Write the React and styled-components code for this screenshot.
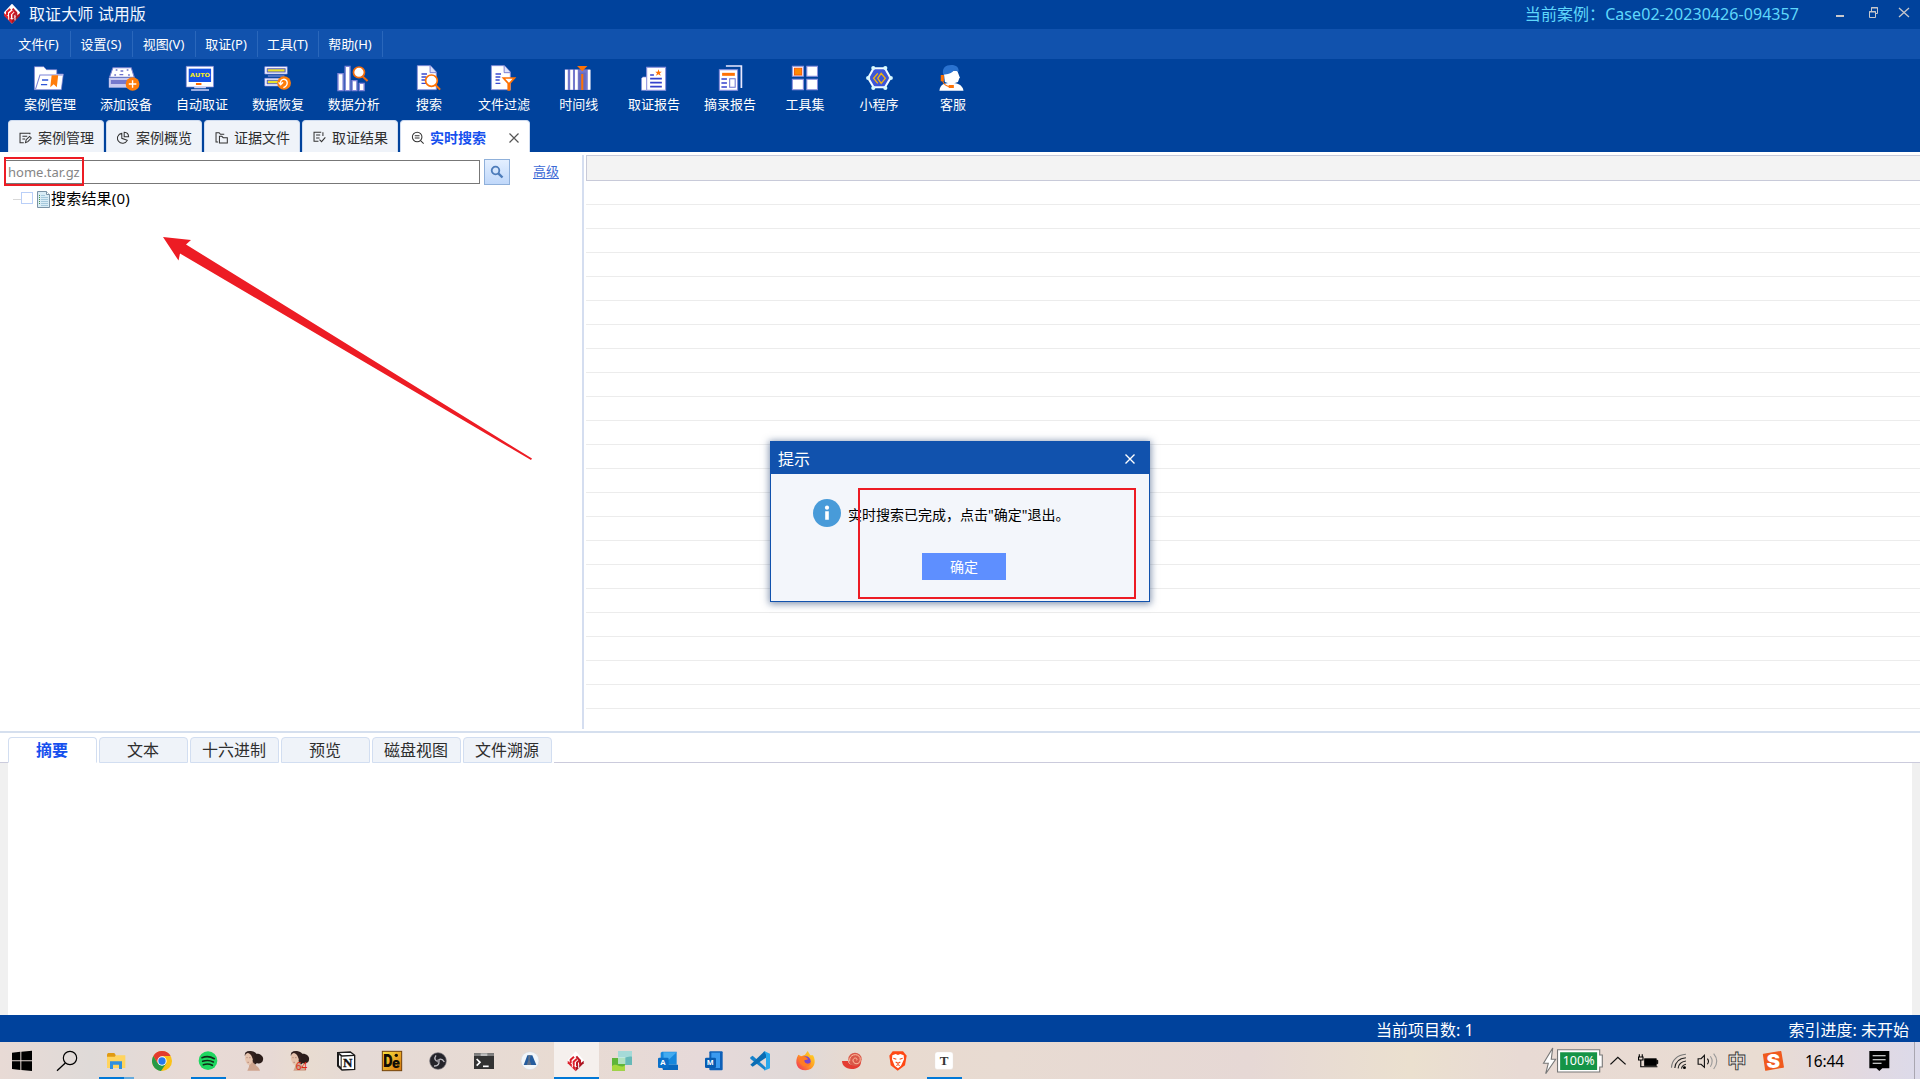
import React from 'react';
import styled, { createGlobalStyle } from 'styled-components';

const Global = createGlobalStyle`
  * { box-sizing: border-box; }
  body { margin: 0; overflow: hidden; background: #fff; }
  svg { display: block; flex: none; }
`;

const BLUE = '#00429c';
const MID = '#1152ad';
const RED = '#ed1c24';

const Window = styled.div`
  position: relative;
  display: flex;
  flex-direction: column;
  width: 1920px;
  height: 1079px;
  overflow: hidden;
  background: #fff;
  color: #000;
  font-family: 'Noto Sans', 'Noto Sans CJK SC', sans-serif;
  font-size: 14px;
  white-space: nowrap;
`;

/* ---------- header ---------- */
const TitleBar = styled.header`
  display: flex;
  align-items: center;
  height: 29px;
  padding-left: 4px;
  background: ${BLUE};
  color: #f2f7ff;
  font-size: 16px;
  line-height: 29px;
`;
const AppName = styled.span`
  margin-left: 9px;
  letter-spacing: 0.1px;
  flex: 1;
`;
const CaseName = styled.span`
  color: #5fd7fb;
  margin-right: 28px;
  letter-spacing: 0.06px;
`;
const MenuBar = styled.nav`
  display: flex;
  align-items: center;
  height: 30px;
  padding-left: 8px;
  background: ${MID};
`;
const MenuItem = styled.div`
  width: ${(p) => p.$w}px;
  height: 26px;
  padding-right: 1px;
  border-right: 1px solid #2a67bb;
  color: #fff;
  font-size: 13px;
  line-height: 26px;
  text-align: center;
`;
const Toolbar = styled.div`
  display: flex;
  height: 61px;
  padding: 5px 0 0 12px;
  background: ${BLUE};
`;
const Tool = styled.div`
  display: flex;
  flex-direction: column;
  align-items: center;
  width: ${(p) => p.$w}px;
  color: #fff;
  font-size: 13px;
  line-height: 25px;
`;
const TabStrip = styled.div`
  display: flex;
  gap: 2px;
  height: 32px;
  padding-left: 8px;
  background: ${BLUE};
`;
const Tab = styled.div`
  display: flex;
  align-items: center;
  width: ${(p) => (p.$active ? 130 : 96)}px;
  padding: 2px 10px 0 10px;
  border: 1px solid #cfdcf0;
  border-bottom: 0;
  border-radius: 4px 4px 0 0;
  background: ${(p) => (p.$active ? '#fff' : '#eff3f9')};
  color: ${(p) => (p.$active ? '#1650ee' : '#2e2e2e')};
  font-weight: ${(p) => (p.$active ? 700 : 400)};
  span { margin: 0 0 2px 6px; flex: 1; }
`;

/* ---------- main ---------- */
const Main = styled.main`
  display: flex;
  height: 579px;
  padding-top: 3px;
`;
const SearchPane = styled.section`
  width: 584px;
  height: 574px;
  border-right: 2px solid #d5def0;
`;
const SearchRow = styled.div`
  display: flex;
  align-items: center;
  height: 34px;
  padding-left: 5px;
`;
const SearchInput = styled.div`
  width: 475px;
  height: 24px;
  padding-left: 2px;
  border: 1px solid #777;
  color: #858585;
  font-size: 13px;
  line-height: 23px;
`;
const SearchButton = styled.div`
  display: flex;
  align-items: center;
  justify-content: center;
  width: 26px;
  height: 26px;
  margin: 0 23px 0 4px;
  border: 1px solid #8fb0da;
  background: linear-gradient(#e3efff, #c0d8fa);
`;
const Advanced = styled.a`
  margin-bottom: 3px;
  color: #3d6bd6;
  font-size: 13px;
  text-decoration: underline;
  text-underline-offset: 2px;
`;
const TreeRow = styled.div`
  display: flex;
  align-items: center;
  height: 20px;
  padding-left: 13px;
  font-size: 15px;
  letter-spacing: 0.2px;
  span { margin: 0 0 3px 1px; }
`;
const Branch = styled.i`
  width: 8px;
  height: 1px;
  background: #d8d8d8;
`;
const Check = styled.i`
  width: 12px;
  height: 12px;
  margin: 0 4px 2px 0;
  border: 1px solid #b9cff8;
`;
const Grid = styled.section`
  flex: 1;
  margin-left: 2px;
`;
const GridHead = styled.div`
  height: 26px;
  border: 1px solid #c8cad9;
  border-right: 0;
  background: #f3f3f3;
`;
const GridRow = styled.div`
  height: 24px;
  border-bottom: 1px solid #ececec;
`;

/* ---------- details ---------- */
const Details = styled.section`
  display: flex;
  flex-direction: column;
  height: 284px;
  border-top: 2px solid #d5dfee;
`;
const DetailTabs = styled.div`
  display: flex;
  align-items: stretch;
  height: 30px;
`;
const Baseline = styled.i`
  width: ${(p) => p.$w || 'auto'};
  flex: ${(p) => (p.$w ? 'none' : 1)};
  border-bottom: 1px solid #cbcbdc;
`;
const DetailTab = styled.div`
  width: 89px;
  margin: 4px 2px 0 0;
  padding-right: 1px;
  border: 1px solid #d2def1;
  border-bottom-color: ${(p) => (p.$active ? '#fff' : '#d2def1')};
  border-radius: 4px 4px 0 0;
  background: ${(p) => (p.$active ? '#fff' : '#eff3f9')};
  color: ${(p) => (p.$active ? '#1650ee' : '#2e2e2e')};
  font-size: 16px;
  font-weight: ${(p) => (p.$active ? 700 : 400)};
  line-height: 25px;
  text-align: center;
`;
const DetailBody = styled.div`
  flex: 1;
  border: solid #f0f0f0;
  border-width: 0 8px;
`;
const StatusBar = styled.footer`
  display: flex;
  justify-content: space-between;
  height: 27px;
  padding: 0 11px 0 1376px;
  background: ${BLUE};
  color: #fff;
  font-size: 16px;
  line-height: 30px;
`;

/* ---------- taskbar ---------- */
const TaskBar = styled.div`
  display: flex;
  height: 37px;
  background: linear-gradient(90deg, #e8dad5 0, #dfdad8 90px, #e8dad5 190px, #e7d9d5 270px, #e9dcd0 300px, #e5dad6 360px, #e8dbd2 560px, #e6d9d9 700px, #e0d9d8 800px, #e8dacf 860px, #e8dbd2 1000px, #e6d8d5 1250px, #ebe0cf 1410px, #e8dad4 1520px, #e9dcd2 1760px, #e3d9df 1850px, #dcdaea 1920px);
`;
const Task = styled.div`
  width: ${(p) => p.$w || 46}px;
  background: ${(p) => (p.$active ? 'linear-gradient(90deg, transparent 1px, #f5f0ed 1px)' : 'transparent')};
`;
const Tray = styled.div`
  display: flex;
  margin-left: auto;
`;
const Clock = styled.div`
  width: 75px;
  padding-left: 14px;
  font-size: 15.5px;
  letter-spacing: -0.1px;
  line-height: 39px;
`;
const ShowDesktop = styled.i`
  width: 6px;
  border-left: 1px solid #a9a6b0;
`;

/* ---------- overlays ---------- */
const Dialog = styled.div`
  position: absolute;
  left: 770px;
  top: 441px;
  width: 380px;
  height: 161px;
  border: 1px solid ${MID};
  background: #f3f6fb;
  box-shadow: 0 1px 7px 1px rgba(30, 60, 110, 0.55);
`;
const DialogTitle = styled.div`
  display: flex;
  align-items: center;
  justify-content: space-between;
  height: 32px;
  padding: 2px 14px 1px 7px;
  background: ${MID};
  color: #fff;
  font-size: 16px;
  line-height: 20px;
`;
const DialogMessage = styled.div`
  display: flex;
  align-items: center;
  gap: 7px;
  height: 28px;
  margin: 25px 0 0 42px;
  span { padding-top: 2px; }
`;
const OkButton = styled.div`
  width: 84px;
  height: 27px;
  margin: 26px 0 0 151px;
  background: #5e8fff;
  color: #fff;
  line-height: 27px;
  text-align: center;
`;
const Marker = styled.div`
  position: absolute;
  left: ${(p) => p.$x}px;
  top: ${(p) => p.$y}px;
  width: ${(p) => p.$w}px;
  height: ${(p) => p.$h}px;
  border: 2px solid ${RED};
`;
const ArrowLayer = styled.svg`
  position: absolute;
  left: 160px;
  top: 230px;
`;

const Pic = ({ w, h, box, children }) => (
  <svg width={w} height={h} viewBox={box} preserveAspectRatio="none" fill="none">{children}</svg>
);

const Cross = ({ c, s = 1.2 }) => (
  <svg width="10" height="10" viewBox="0 0 10 10"><path d="M.5.5 9.5 9.5M9.5.5.5 9.5" stroke={c} strokeWidth={s} /></svg>
);

/* brand cube, drawn on a 48 x 60 canvas */
const Cube = () => (
  <g>
    <path d="M24 0 48 26V34L24 60 0 34V26Z" fill="#fff" />
    <path d="M0 28 24 48V60L0 36Z" fill="#dc1f2a" />
    <path d="M48 28 24 48V60L48 36Z" fill="#a81420" />
    <path d="M9 35V25L19 16M18 43V31L28 22" stroke="#dc1f2a" strokeWidth="6" />
    <path d="M28 44V34L38 24M37 38V28L26 15" stroke="#c11824" strokeWidth="6" />
    <path d="M14 38V48M33 40V50" stroke="#fff" strokeWidth="3" />
  </g>
);

const Page = ({ x }) => (
  <g transform={`translate(${x} 0)`}>
    <path d="M1 197H39L56 216V269H1Z" fill="#fff" stroke="#8a90dc" strokeWidth="2.5" />
    <path d="M38 198V218H56" fill="#dfe2fb" stroke="#6a70cc" strokeWidth="2.5" />
    <path d="M13 222H29M13 231H27M13 240H25M13 250H27" stroke="#3a49d0" strokeWidth="4" />
  </g>
);

const tools = [
  ['案例管理', 76, 50, (
    <g>
      <path d="M100 200H127L135 209H165V222H184L178 269H100Z" fill="#fff" stroke="#777bd0" strokeWidth="2" />
      <path d="M103 268 116 225H182" stroke="#7d83d8" strokeWidth="3" />
      <path d="M122 240H140M119 254H137" stroke="#2f55d6" strokeWidth="4" />
      <path d="M150 226H169L165 262 156 253 146 262Z" fill="#ff7d0a" />
    </g>
  )],
  ['添加设备', 76, 126, (
    <g>
      <path d="M328 203H381L390 232H318Z" fill="#fff" stroke="#7b80cd" strokeWidth="3" />
      <path d="M316 234H391V263H316Z" fill="#c9caf0" />
      <path d="M322 240H372V252H322Z" fill="#7579cd" />
      <path d="M336 210h5M368 210h5M332 225h5M372 225h5M350 213h8M347 224h11" stroke="#6d72ca" strokeWidth="4" />
      <circle cx="385" cy="252" r="20" fill="#ff7d0a" />
      <path d="M374 252H396M385 241V263" stroke="#fff" strokeWidth="4" />
    </g>
  )],
  ['自动取证', 76, 202, (
    <g>
      <path d="M541 199H620V261H541Z" fill="#fff" stroke="#8187d8" strokeWidth="2" />
      <path d="M548 206H613V246H548Z" fill="#1552e6" />
      <text x="552" y="231" fontSize="17" fontWeight="700" fontFamily="DejaVu Sans" fill="#f8ec1e" textLength="58" lengthAdjust="spacingAndGlyphs">AUTO</text>
      <path d="M569 252H585" stroke="#ff6a00" strokeWidth="6" />
      <path d="M564 263H598M555 270H607" stroke="#cfd2fa" strokeWidth="4" />
    </g>
  )],
  ['数据恢复', 76, 278, (
    <g>
      <path d="M769 200H834V222H769ZM769 235H834V258H769Z" fill="#fff" stroke="#8a8fe0" strokeWidth="2" />
      <path d="M776 206H828V216H776ZM776 241H812V251H776Z" fill="#e9e22c" stroke="#5058c8" strokeWidth="3" />
      <path d="M778 228H826" stroke="#9da2ea" strokeWidth="3" />
      <circle cx="825" cy="249" r="20" fill="#ff7d0a" />
      <path d="M815 250C812 236 832 233 834 247 835 258 828 261 823 263M809 247 815 254 822 247" stroke="#fff" strokeWidth="4" />
    </g>
  )],
  ['数据分析', 75.5, 353.5, (
    <g>
      <path d="M980 221H995V272H980ZM1001 199H1015V272H1001ZM1021 242H1035V272H1021ZM1042 250H1056V272H1042Z" fill="#fff" stroke="#7f84d6" strokeWidth="4" />
      <circle cx="1041" cy="217" r="16" fill="#fff" stroke="#f26b0d" strokeWidth="5" />
      <path d="M1051 229 1066 243" stroke="#f26b0d" strokeWidth="6" />
    </g>
  )],
  ['搜索', 75, 429, (
    <g>
      <Page x={1211} />
      <circle cx="1253" cy="242" r="17" fill="#fff" stroke="#ff7204" strokeWidth="5" />
      <path d="M1264 254 1278 269" stroke="#ff7204" strokeWidth="6" />
    </g>
  )],
  ['文件过滤', 75, 504, (
    <g>
      <Page x={1426} />
      <path d="M1462 234H1494L1480 250V270H1476V250Z" fill="#fff" stroke="#ff7204" strokeWidth="5" />
    </g>
  )],
  ['时间线', 74.5, 578.7 - 500, (
    <g>
      <path d="M187 208H261V270H187Z" fill="#7378cc" />
      <path d="M192 209V269M207 209V269M221 209V269M258 209V269" stroke="#fff" strokeWidth="8" />
      <path d="M228 218H248V270H228Z" fill="#666bc0" />
      <path d="M238 222V270" stroke="#ff7204" strokeWidth="6" />
      <path d="M223 198H253L238 214Z" fill="#ff7204" />
    </g>
  )],
  ['取证报告', 76, 654 - 500, (
    <g>
      <path d="M411 271V235L415 231H427V271Z" fill="#fff" stroke="#8b90dd" strokeWidth="2" />
      <path d="M426 202H481V271H426Z" fill="#fff" stroke="#8b90dd" strokeWidth="3" />
      <path d="M436 225H447M436 236H470M436 248H470M436 260H470" stroke="#3442cc" strokeWidth="5" />
      <path d="M460 208 463 215H470L464 220 467 227 460 223 453 227 456 220 451 215H458Z" fill="#ff7204" />
    </g>
  )],
  ['摘录报告', 76, 730 - 500, (
    <g>
      <path d="M656 198H701V264" stroke="#e9e9ff" strokeWidth="5" />
      <path d="M637 209H690V271H637Z" fill="#fff" stroke="#878cdd" strokeWidth="3" />
      <path d="M645 223H682" stroke="#ff7204" strokeWidth="9" />
      <path d="M643 237H659M643 249H659M643 261H659" stroke="#3442cc" strokeWidth="5" />
      <path d="M667 236H683V262H667Z" stroke="#6d74d0" strokeWidth="3" />
    </g>
  )],
  ['工具集', 74, 805 - 500, (
    <g>
      <path d="M849 199H881V229H849ZM891 199H922V229H891ZM849 238H881V269H849ZM891 238H922V269H891Z" fill="#fff" stroke="#8b90dd" strokeWidth="3" />
      <path d="M855 205H876V225H855Z" fill="#ff8a00" stroke="#f7590a" strokeWidth="3" />
    </g>
  )],
  ['小程序', 74, 879 - 500, (
    <g>
      <path d="M1085 205H1118L1134 234 1118 262H1085L1069 234Z" fill="#3e56d8" stroke="#f2fbff" strokeWidth="6" />
      <g fill="#d7f8ff"><circle cx="1084" cy="204" r="6" /><circle cx="1119" cy="204" r="6" /><circle cx="1135" cy="234" r="6" /><circle cx="1119" cy="264" r="6" /><circle cx="1084" cy="264" r="6" /><circle cx="1069" cy="234" r="6" /></g>
      <path d="M1097 220 1085 235 1097 250M1107 220 1119 235 1107 250 1097 235Z" stroke="#f3b20d" strokeWidth="4" />
    </g>
  )],
  ['客服', 74, 953 - 500, (
    <g>
      <path d="M1276 272C1278 252 1292 249 1310 249S1343 254 1346 272Z" fill="#fff" />
      <path d="M1288 212H1328L1335 232 1330 246 1310 253 1292 246Z" fill="#fff" />
      <path d="M1287 224C1283 204 1294 195 1310 195 1326 195 1333 203 1332 215L1318 211C1312 221 1300 223 1287 224Z" fill="#2a72cf" />
      <path d="M1280 225H1289V244H1280ZM1303 255H1318V264H1303Z" fill="#ff7204" />
      <path d="M1285 242C1289 254 1296 259 1306 260" stroke="#ff7204" strokeWidth="3" />
    </g>
  )],
];

const G = { stroke: '#333', strokeWidth: 3 };
const tabs = [
  ['案例管理', 57, <g {...G}><path d="M88 402V399H59V427H70M66 408H80M66 416H74M75 427 77 418 87 408 92 413 82 424Z" /></g>],
  ['案例概览', 343, <g {...G}><path d="M356 399A15 15 0 1 0 372 420L356 414ZM363 396A14 14 0 0 1 376 409H363Z" /></g>],
  ['证据文件', 626, <g {...G}><path d="M652 402H641L637 397H628V425H634M638 408H645L649 412H661V428H638Z" /></g>],
  ['取证结果', 912, <g {...G}><path d="M935 396H914V423H927M920 404H932M920 413H930M930 418 936 424 947 411M940 396V407" /></g>],
  ['实时搜索', 1195, <g {...G}><circle cx="1212" cy="410" r="14" /><path d="M1222 421 1231 430M1205 406H1219M1205 413H1219" /></g>],
];

const Portrait = ({ x, badge }) => (
  <g transform={`translate(${x} 0)`}>
    <path d="M3 160C8 151 28 150 37 161 48 160 60 168 57 180 56 189 45 193 39 189L31 196 20 180Z" fill="#2b1c1a" />
    <path d="M20 180 30 187C31 197 44 198 48 212H10C13 204 17 200 15 191Z" fill="#cfa48e" />
    <path d="M4 164C7 156 22 156 27 168 29 179 24 190 16 195 9 195 6 188 3 178Z" fill="#e6c3ad" />
    <path d="M2 165C3 153 22 149 31 161L33 188 28 190C28 176 22 161 12 159 7 159 4 162 3 168Z" fill="#34211e" />
    <path d="M7 173H11M15 173H20M10 187H15" stroke="#a5766a" strokeWidth="2" />
    {badge && <text x="17" y="209" fontSize="30" fontFamily="Noto Sans" fill="#e02712">64</text>}
  </g>
);

const Bar = ({ x, w = 105 }) => <path d={`M${x} 231h${w}v6h-${w}z`} fill="#0078d7" />;

const tasks = [
  <g><path d="M321 163 324 159H343L347 165V180H321Z" fill="#e09a12" /><path d="M321 170H344L349 166H376V204H321Z" fill="#ffd45e" /><path d="M330 207V184H366V207H357V194H339V207Z" fill="#2e8fdf" /><Bar x={297} w={75} /><path d="M372 231h30v6h-30z" fill="#65aadd" /></g>,
  <g><circle cx="486" cy="183" r="30" fill="#fbc116" /><path d="M460 168A30 30 0 0 1 512 168H486L473 190Z" fill="#e33b2e" /><path d="M460 168A30 30 0 0 0 483 213L499 190H473Z" fill="#269a47" /><circle cx="486" cy="183" r="14" fill="#fff" /><circle cx="486" cy="183" r="11" fill="#2779ec" /></g>,
  <g><circle cx="624" cy="182" r="28" fill="#1ed760" /><path d="M606 173Q625 166 643 176M608 184Q625 178 640 186M610 194Q625 189 637 196" stroke="#102b18" strokeWidth="5" strokeLinecap="round" /><Bar x={573} /></g>,
  <Portrait x={732} />,
  <Portrait x={870} badge />,
  <g><path d="M1013 158 1051 156 1064 166V208L1026 210 1013 198Z" fill="#fff" stroke="#1b1b1b" strokeWidth="4" /><path d="M1013 159 1025 169V208L1013 197Z" fill="#1b1b1b" /><path d="M1017 165 1022 169V200L1017 196Z" fill="#fff" /><path d="M1015 159 1026 168 1063 166" stroke="#1b1b1b" strokeWidth="4" /><text x="1029" y="202" fontFamily="Liberation Serif" fontWeight="700" fontSize="39" fill="#111" stroke="#111">N</text></g>,
  <g><rect x="1147" y="154" width="58" height="58" fill="url(#amber)" stroke="#72420b" strokeWidth="3" /><text x="1150" y="202" fontFamily="Inter" fontWeight="900" fontSize="50" fill="#120d05" textLength="28" lengthAdjust="spacingAndGlyphs">D</text><text x="1176" y="205" fontFamily="Inter" fontWeight="900" fontSize="42" fill="#120d05" textLength="24" lengthAdjust="spacingAndGlyphs">e</text><circle cx="1189" cy="166" r="5" fill="#120d05" /></g>,
  <g><circle cx="1314" cy="183" r="25" fill="#25242a" stroke="#77747b" strokeWidth="2" /><path d="M1308 166C1301 176 1306 184 1314 184M1333 186C1326 174 1316 176 1315 184M1302 198C1314 199 1320 190 1315 184" stroke="#bcbac0" strokeWidth="4" /><circle cx="1315" cy="183" r="5" fill="#8d8a91" /></g>,
  <g><path d="M1422 160H1482V207H1422Z" fill="#333" /><path d="M1422 160H1482V168H1422Z" fill="#808080" /><path d="M1442 160H1462V168H1442Z" fill="#bcbcbc" /><path d="M1430 177 1440 187 1430 197" stroke="#fff" strokeWidth="5" /><path d="M1449 199H1466" stroke="#fff" strokeWidth="5" /></g>,
  <g transform="translate(1470 0)"><circle cx="120" cy="182" r="27" fill="#f2f5f8" stroke="#d3d7dd" strokeWidth="1.5" /><path d="M112 166H127L139 195H101Z" fill="#245c9e" /><path d="M115 166H122L119 180 124 195H110L115 181Z" fill="#5f7088" /></g>,
  <g transform="translate(1470 0)"><g transform="translate(233 154)"><Cube /></g><Bar x={192} w={135} /></g>,
  <g transform="translate(1470 0)"><rect x="384" y="153" width="42" height="42" fill="#67b9b8" /><path d="M384 153H426V170C410 166 398 180 384 176Z" fill="#a5dad8" /><rect x="366" y="174" width="39" height="38" fill="#5fb53a" /><path d="M366 198C380 186 392 208 405 196V212H366Z" fill="#a6d83e" /><rect x="384" y="171" width="22" height="21" fill="#c5ece2" opacity=".8" /></g>,
  <g transform="translate(1470 0)"><path d="M512 158 516 155H560V194H512Z" fill="#1687dc" /><path d="M520 157H560L522 193Z" fill="#42abf0" /><path d="M514 194H564V210H519Z" fill="#0868bf" /><rect x="504" y="173" width="32" height="31" rx="4" fill="#0b70c9" /><text x="511" y="196" fontSize="23" fontFamily="Open Sans" fontWeight="700" fill="#fff">A</text></g>,
  <g transform="translate(1470 0)"><rect x="658" y="154" width="40" height="57" rx="3" fill="#0e60b8" /><path d="M664 158H690V204H664Z" fill="#3b9af0" /><rect x="645" y="173" width="33" height="31" rx="4" fill="#075bb1" /><text x="650" y="196" fontSize="22" fontFamily="Open Sans" fontWeight="700" fill="#fff">M</text></g>,
  <g transform="translate(1470 0)"><path d="M781 172 788 167 828 203 825 211 781 176Z" fill="#1683cb" /><path d="M781 194 823 154 828 157 828 173 788 200Z" fill="#0b6db4" /><path d="M822 153 840 161V205L822 212 828 203V164Z" fill="#29a9ed" /></g>,
  <g transform="translate(1470 0)"><path d="M925 164 934 169 945 164 953 153 961 166 969 166C980 184 974 211 947 211 920 211 912 186 925 164Z" fill="url(#fox)" /><circle cx="947" cy="184" r="15" fill="#7745cf" /><path d="M928 172C942 165 950 171 955 178L943 181C943 191 955 195 963 186 962 205 932 204 928 183Z" fill="#ff7c24" /></g>,
  <g transform="translate(1470 0)"><path d="M1056 183H1074C1074 194 1091 199 1104 189L1112 177C1117 200 1102 207 1085 207 1066 206 1057 197 1056 183Z" fill="#e43c32" /><circle cx="1095" cy="178" r="20" fill="#d95849" /><path d="M1079 184C1076 162 1104 158 1110 173 1115 194 1092 196 1089 183 1088 171 1105 172 1100 181" stroke="#ffbf9f" strokeWidth="3" /></g>,
  <g transform="translate(1470 0)"><path d="M1208 154H1239L1250 167 1245 196 1223 212 1202 196 1198 167Z" fill="#ff4814" /><path d="M1207 166 1217 162 1224 165 1231 162 1241 166 1242 178 1233 197 1224 205 1214 197 1206 178Z" fill="#fff" /><path d="M1210 175 1219 178M1238 175 1229 178M1217 186 1224 190 1231 186M1219 197 1224 194 1229 197" stroke="#f34b19" strokeWidth="3.2" /></g>,
  <g transform="translate(1470 0)"><rect x="1335" y="156" width="54" height="52" rx="8" fill="#fff" stroke="#e6e4e2" /><text x="1349" y="195" fontSize="39" fontFamily="Liberation Serif" fontWeight="700" fill="#333">T</text><Bar x={1311} /></g>,
];

/* [left edge, right edge, drawing] */
const tray = [
  [1540, 1606, <g><path d="M575 144 550 190H563L556 221 583 178H571Z" fill="#fff" stroke="#777" strokeWidth="3" /><path d="M588 149H702V165H709V201H702V216H588Z" fill="#fff" stroke="#777" strokeWidth="3" /><path d="M595 157H695V210H595Z" fill="#159447" /><text x="602" y="196" fontSize="36" fontFamily="Noto Sans" fill="#fff" textLength="86" lengthAdjust="spacingAndGlyphs">100%</text></g>],
  [1606, 1631, <path d="M731 193 751 172 772 193" stroke="#111" strokeWidth="3.5" />],
  [1631, 1664, <g><path d="M823 176H855V197H823ZM856 181H859V191H856Z" fill="#000" stroke="#000" strokeWidth="2" /><path d="M807 171H819V180H807ZM809 163V171M817 163V171M813 180V200H858" stroke="#000" strokeWidth="3" /></g>],
  [1664, 1691, <g strokeWidth="3"><path d="M896 203C897 180 912 165 935 163" stroke="#777" /><path d="M905 204C906 187 917 175 935 173M914 205C915 194 922 185 935 183M923 206C924 200 927 195 935 193" stroke="#222" /><circle cx="931" cy="203" r="4" fill="#000" /></g>],
  [1691, 1722, <g strokeWidth="3"><path d="M968 176H976L985 166V202L976 193H968Z" stroke="#111" /><path d="M993 176Q999 184 993 193" stroke="#111" /><path d="M1001 169Q1011 184 1001 200M1010 161Q1027 184 1010 207" stroke="#999" /></g>],
  [1722, 1752, <text x="1047" y="204" fontSize="54" fontFamily="Noto Sans CJK SC" fontWeight="700" fill="#f2ece8" stroke="#333" strokeWidth="2.5" textLength="52" lengthAdjust="spacingAndGlyphs">中</text>],
  [1752, 1791, <g><path d="M1145 163 1191 155 1198 201 1151 210Z" fill="#f05a1e" stroke="#f05a1e" strokeWidth="4" strokeLinejoin="round" /><text x="1153" y="203" fontSize="55" fontFamily="Inter" fontWeight="900" fill="#fff">S</text></g>],
];

export default function App() {
  return (
    <Window>
      <Global />
      <svg width="0" height="0" style={{ position: 'absolute' }}>
        <defs>
          <linearGradient id="amber" x1="0" y1="0" x2="1" y2="1"><stop stopColor="#fbe33d" /><stop offset="1" stopColor="#d9730d" /></linearGradient>
          <linearGradient id="fox" x1="1" y1="0" x2="0" y2="1"><stop stopColor="#ffe226" /><stop offset=".5" stopColor="#ff9a23" /><stop offset="1" stopColor="#f0265f" /></linearGradient>
        </defs>
      </svg>
      <TitleBar>
        <Pic w={16} h={22} box="0 1 48 66"><Cube /></Pic>
        <AppName>取证大师 试用版</AppName>
        <CaseName>当前案例：Case02-20230426-094357</CaseName>
        <Pic w={93} h={29} box="1827 0 93 29">
          <path d="M1836 15h8v2h-8z" fill="#c8c8cc" />
          <path d="M1869.5 11.5h6v6h-6zM1869 12h7M1871.5 11V7.5h6v6H1876M1871 8h7" stroke="#c8c8cc" />
          <path d="M1899 8 1909 17M1909 8 1899 17" stroke="#c8c8cc" strokeWidth="1.3" />
        </Pic>
      </TitleBar>
      <MenuBar>
        {[['文件(F)', 63], ['设置(S)', 62], ['视图(V)', 63], ['取证(P)', 62], ['工具(T)', 61], ['帮助(H)', 64]].map(([t, w]) => (
          <MenuItem key={t} $w={w}>{t}</MenuItem>
        ))}
      </MenuBar>
      <Toolbar>
        {tools.map(([t, w, cx, art]) => (
          <Tool key={t} $w={w}>
            <Pic w={40} h={28} box={`${(cx - 20) * 2.904} 192 116.2 84`}>{art}</Pic>
            {t}
          </Tool>
        ))}
      </Toolbar>
      <TabStrip>
        {tabs.map(([t, x, art], i) => (
          <Tab key={t} $active={i === 4}>
            <Pic w={13} h={14} box={`${x - 1} 392 38 42`}>{art}</Pic>
            <span>{t}</span>
            {i === 4 && <Cross c="#555" />}
          </Tab>
        ))}
      </TabStrip>

      <Main>
        <SearchPane>
          <SearchRow>
            <SearchInput>home.tar.gz</SearchInput>
            <SearchButton>
              <svg width="14" height="14" viewBox="0 0 14 14" fill="none"><circle cx="5.5" cy="5.5" r="3.8" stroke="#4d7cba" strokeWidth="1.8" /><path d="M8.3 8.3 12.5 12.5" stroke="#4d7cba" strokeWidth="2.4" /></svg>
            </SearchButton>
            <Advanced>高级</Advanced>
          </SearchRow>
          <TreeRow>
            <Branch />
            <Check />
            <svg width="13" height="17" viewBox="0 0 13 17" fill="none">
              <path d="M.5.5H9.5L12.5 3.5V16.5H.5Z" fill="#d9ecf6" stroke="#7b93a6" />
              <path d="M9.5.5V3.5H12.5" fill="#fff" stroke="#7b93a6" />
              <path d="M4 4.5H8M4 6.5H11M4 8.5H11M4 10.5H11M4 12.5H11M4 14.5H11" stroke="#a5c8dc" />
              <path d="M2 4.5h1M2 6.5h1M2 8.5h1M2 10.5h1M2 12.5h1" stroke="#4b9a4a" />
            </svg>
            <span>搜索结果(0)</span>
          </TreeRow>
        </SearchPane>
        <Grid>
          <GridHead />
          {Array.from({ length: 22 }, (_, i) => <GridRow key={i} />)}
        </Grid>
      </Main>

      <Details>
        <DetailTabs>
          <Baseline $w="8px" />
          {['摘要', '文本', '十六进制', '预览', '磁盘视图', '文件溯源'].map((t, i) => (
            <DetailTab key={t} $active={i === 0}>{t}</DetailTab>
          ))}
          <Baseline />
        </DetailTabs>
        <DetailBody />
      </Details>

      <StatusBar>
        <span>当前项目数: 1</span>
        <span>索引进度: 未开始</span>
      </StatusBar>

      <TaskBar>
        <Task $w={45}>
          <Pic w={45} h={37} box="0 126 135 111"><path d="M36 158 61 155V181H36ZM64 155 96 152V181H64ZM36 184H61V210L36 207ZM64 184H96V213L64 210Z" fill="#000" /></Pic>
        </Task>
        <Task $w={48}>
          <Pic w={48} h={37} box="135 126 144 111"><circle cx="210" cy="174" r="20" stroke="#000" strokeWidth="3.5" /><path d="M196 189 171 212" stroke="#000" strokeWidth="4" /></Pic>
        </Task>
        {tasks.map((art, i) => (
          <Task key={i} $active={i === 10}>
            <Pic w={46} h={37} box={`${(93 + 46 * i) * 3} 126 138 111`}>{art}</Pic>
          </Task>
        ))}
        <Tray>
          {tray.map(([a, b, art]) => (
            <Pic key={a} w={b - a} h={37} box={`${(a - 1340) * 2.703} 126 ${(b - a) * 2.703} 111`}>{art}</Pic>
          ))}
          <Clock>16:44</Clock>
          <Pic w={48} h={37} box="1421 126 129.7 111">
            <path d="M1430 153H1484V205H1465L1457 213 1449 205H1430Z" fill="#000" />
            <path d="M1439 167H1474M1439 179H1474M1439 190H1463" stroke="#fff" strokeWidth="3" />
          </Pic>
          <ShowDesktop />
        </Tray>
      </TaskBar>

      <Dialog>
        <DialogTitle>提示<Cross c="#fff" s={1.4} /></DialogTitle>
        <DialogMessage>
          <svg width="28" height="28" viewBox="0 0 28 28"><circle cx="14" cy="14" r="14" fill="#489bd9" /><circle cx="14" cy="8.7" r="2.1" fill="#fff" /><path d="M12.2 12.2h3.6v8.6h-3.6z" fill="#fff" /></svg>
          <span>实时搜索已完成，点击"确定"退出。</span>
        </DialogMessage>
        <OkButton>确定</OkButton>
      </Dialog>

      <Marker $x={4} $y={157} $w={80} $h={29} />
      <Marker $x={858} $y={488} $w={278} $h={111} />
      <ArrowLayer width="380" height="235" viewBox="160 230 380 235">
        <path d="M163 237 191 240 186 244.5 532 458.5 531 460 180 253.5 178.5 260.5Z" fill={RED} />
      </ArrowLayer>
    </Window>
  );
}
